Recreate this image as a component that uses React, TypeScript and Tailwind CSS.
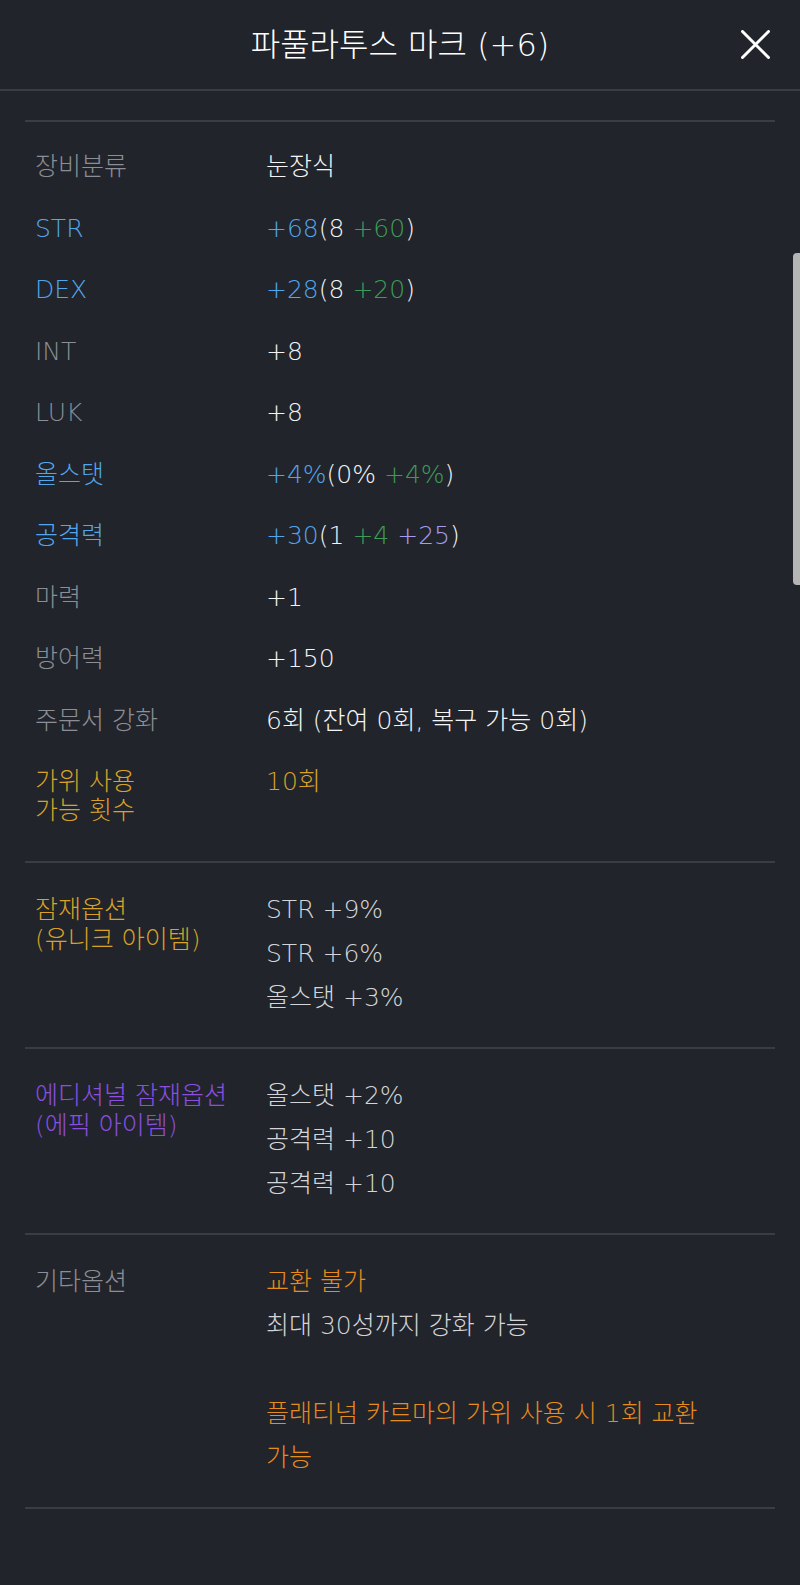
const font = { fontFamily: '"DejaVu Sans", "Noto Sans CJK KR", sans-serif' };

type Part = { text: string; color: string };

const blue = 'text-[#52a6ec]';
const green = 'text-[#3f9b58]';
const white = 'text-[#f4f4f4]';
const gray = 'text-[#8b8e94]';

const statRows: { label: string; labelColor: string; value: Part[] }[] = [
  { label: '장비분류', labelColor: gray, value: [{ text: '눈장식', color: white }] },
  {
    label: 'STR',
    labelColor: blue,
    value: [
      { text: '+68', color: blue },
      { text: '(8 ', color: white },
      { text: '+60', color: green },
      { text: ')', color: white },
    ],
  },
  {
    label: 'DEX',
    labelColor: blue,
    value: [
      { text: '+28', color: blue },
      { text: '(8 ', color: white },
      { text: '+20', color: green },
      { text: ')', color: white },
    ],
  },
  { label: 'INT', labelColor: gray, value: [{ text: '+8', color: white }] },
  { label: 'LUK', labelColor: gray, value: [{ text: '+8', color: white }] },
  {
    label: '올스탯',
    labelColor: blue,
    value: [
      { text: '+4%', color: blue },
      { text: '(0% ', color: white },
      { text: '+4%', color: green },
      { text: ')', color: white },
    ],
  },
  {
    label: '공격력',
    labelColor: blue,
    value: [
      { text: '+30', color: blue },
      { text: '(1 ', color: white },
      { text: '+4', color: green },
      { text: ' ', color: white },
      { text: '+25', color: 'text-[#a59cf0]' },
      { text: ')', color: white },
    ],
  },
  { label: '마력', labelColor: gray, value: [{ text: '+1', color: white }] },
  { label: '방어력', labelColor: gray, value: [{ text: '+150', color: white }] },
  { label: '주문서 강화', labelColor: gray, value: [{ text: '6회 (잔여 0회, 복구 가능 0회)', color: white }] },
];

const Divider = () => <div className="h-[2px] bg-[#3a3d46]" />;

const OptionSection = ({
  label,
  labelColor,
  lines,
}: {
  label: string[];
  labelColor: string;
  lines: Part[];
}) => (
  <div className="grid grid-cols-[231px_1fr] pl-[10px] pr-[10px] pt-[25px] pb-[27px]">
    <div className={`mt-[7px] leading-[30px] ${labelColor}`}>
      {label.map((l) => (
        <div key={l}>{l}</div>
      ))}
    </div>
    <div className="max-w-[470px] break-keep leading-[44px]">
      {lines.map((l, i) => (
        <div key={i} className={`${l.color} min-h-[44px]`}>
          {l.text}
        </div>
      ))}
    </div>
  </div>
);

export default function App() {
  return (
    <div className="relative min-h-[1585px] w-[800px] overflow-hidden bg-[#21242b] font-light" style={font}>
      {/* Header */}
      <header className="relative flex h-[91px] items-center justify-center border-b-2 border-[#3a3d46]">
        <h1 className="text-[32px] font-light text-white">파풀라투스 마크 (+6)</h1>
        <button className="absolute right-[30px] top-[30px]" aria-label="닫기">
          <svg width="29" height="29" viewBox="0 0 29 29">
            <path d="M1.5 1.5 L27.5 27.5 M27.5 1.5 L1.5 27.5" stroke="#ffffff" strokeWidth="3" strokeLinecap="round" />
          </svg>
        </button>
      </header>

      <div className="px-[25px] pt-[29px] text-[25px]">
        <Divider />

        {/* Basic stats */}
        <div className="flex flex-col gap-[31.5px] pl-[10px] pr-[10px] pt-[30px] pb-[36px]">
          {statRows.map((row) => (
            <div key={row.label} className="grid grid-cols-[231px_1fr] leading-[30px]">
              <div className={row.labelColor}>{row.label}</div>
              <div>
                {row.value.map((p, i) => (
                  <span key={i} className={`${p.color} whitespace-pre`}>
                    {p.text}
                  </span>
                ))}
              </div>
            </div>
          ))}
          <div className="grid grid-cols-[231px_1fr]">
            <div className="leading-[29px] text-[#d9a227]">
              <div>가위 사용</div>
              <div>가능 횟수</div>
            </div>
            <div className="leading-[29px] text-[#d9a227]">10회</div>
          </div>
        </div>

        <Divider />
        <OptionSection
          label={['잠재옵션', '(유니크 아이템)']}
          labelColor="text-[#d9a227]"
          lines={[
            { text: 'STR +9%', color: 'text-[#d4d5d8]' },
            { text: 'STR +6%', color: 'text-[#d4d5d8]' },
            { text: '올스탯 +3%', color: 'text-[#d4d5d8]' },
          ]}
        />
        <Divider />
        <OptionSection
          label={['에디셔널 잠재옵션', '(에픽 아이템)']}
          labelColor="text-[#8b4fe0]"
          lines={[
            { text: '올스탯 +2%', color: 'text-[#d4d5d8]' },
            { text: '공격력 +10', color: 'text-[#d4d5d8]' },
            { text: '공격력 +10', color: 'text-[#d4d5d8]' },
          ]}
        />
        <Divider />
        <OptionSection
          label={['기타옵션']}
          labelColor={gray}
          lines={[
            { text: '교환 불가', color: 'text-[#e68b1c]' },
            { text: '최대 30성까지 강화 가능', color: 'text-[#d4d5d8]' },
            { text: '', color: 'text-[#d4d5d8]' },
            { text: '플래티넘 카르마의 가위 사용 시 1회 교환 가능', color: 'text-[#e68b1c]' },
          ]}
        />
        <Divider />
      </div>

      {/* scrollbar thumb */}
      <div className="absolute right-0 top-[253px] h-[332px] w-[7px] rounded-l-[4px] bg-[#b5b5b5]" />
    </div>
  );
}
